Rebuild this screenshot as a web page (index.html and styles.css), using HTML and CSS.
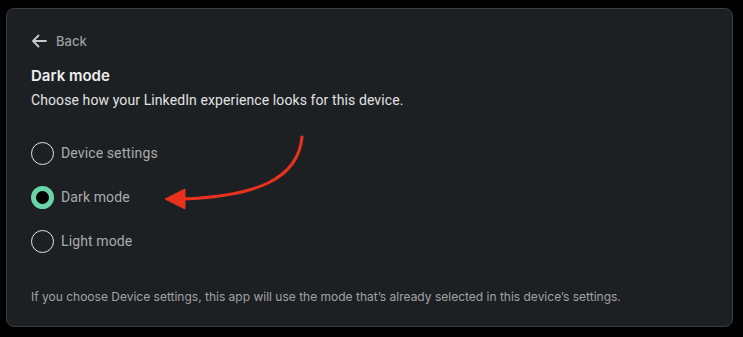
FILE: index.html
```html
<!DOCTYPE html>
<html lang="en">
<head>
    <meta charset="UTF-8">
    <meta name="viewport" content="width=device-width, initial-scale=1.0">
    <title>Dark mode</title>
    <link rel="stylesheet" href="styles.css">
</head>
<body>
    <div class="card">
        <a class="back" href="#">
            <svg width="16" height="14" viewBox="0 0 16 14"><path d="M15 7H2M7.5 1.5L2 7l5.5 5.5" fill="none" stroke="#c8c8c8" stroke-width="1.8" stroke-linecap="round" stroke-linejoin="round"/></svg>
            <span>Back</span>
        </a>

        <h1>Dark mode</h1>
        <p class="subtitle">Choose how your LinkedIn experience looks for this device.</p>

        <div class="options">
            <label class="option"><span class="radio"></span>Device settings</label>
            <label class="option"><span class="radio checked"></span>Dark mode</label>
            <label class="option"><span class="radio"></span>Light mode</label>
        </div>

        <p class="note">If you choose Device settings, this app will use the mode that’s already selected in this device’s settings.</p>

        <!-- annotation arrow -->
        <svg class="pointer" width="160" height="100" viewBox="0 0 160 100">
            <path d="M152 17 C 148 60, 105 76, 33 79" fill="none" stroke="#e8321e" stroke-width="3" stroke-linecap="round"/>
            <path d="M15 79 L35 69 L35 89 Z" fill="#e8321e" stroke="#e8321e" stroke-width="1" stroke-linejoin="round"/>
        </svg>
    </div>
</body>
</html>
```

FILE: styles.css
```css
body {
    margin: 0;
    background-color: #000;
    font-family: Roboto, "Liberation Sans", sans-serif;
    width: 743px;
    height: 337px;
    overflow: hidden;
}
.card {
    position: relative;
    margin: 8px 0 0 6px;
    width: 727px;
    height: 319px;
    box-sizing: border-box;
    background-color: #1d2023;
    border: 1px solid #3a3d40;
    border-radius: 8px;
    padding: 22px 24px 0 24px;
}
.back {
    display: flex;
    align-items: center;
    gap: 9px;
    color: #9a9c9e;
    text-decoration: none;
    font-family: Inter, sans-serif;
    font-size: 13px;
    font-weight: 500;
    height: 20px;
}
h1 {
    margin: 15px 0 0 0;
    font-family: Inter, sans-serif;
    font-size: 15px;
    font-weight: 600;
    color: #eeeeee;
    line-height: 20px;
}
.subtitle {
    margin: 4px 0 0 0;
    font-size: 14px;
    letter-spacing: 0.1px;
    color: #e2e2e2;
    line-height: 20px;
}
.options {
    display: flex;
    flex-direction: column;
    gap: 20px;
    margin-top: 31px;
}
.option {
    display: flex;
    align-items: center;
    gap: 7px;
    font-size: 14px;
    letter-spacing: 0.12px;
    color: #a9abad;
    height: 24px;
}
.radio {
    width: 23px;
    height: 23px;
    box-sizing: border-box;
    border: 1.5px solid #e4e4e4;
    border-radius: 50%;
}
.radio.checked {
    border: 5px solid #6ad4a8;
    background-color: #000;
}
.note {
    margin: 36px 0 0 0;
    font-family: Inter, sans-serif;
    font-size: 12px;
    color: #a0a2a4;
}
.pointer {
    position: absolute;
    left: 143px;
    top: 111px;
}
```
